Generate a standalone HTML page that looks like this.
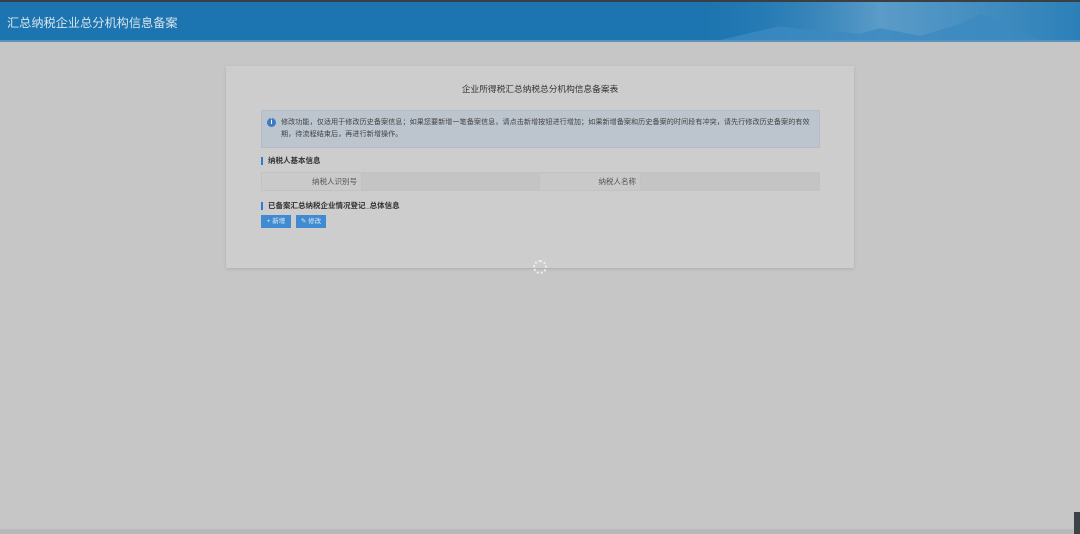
<!DOCTYPE html>
<html><head><meta charset="utf-8"><style>
body{margin:0;width:1080px;height:534px;background:#c6c6c6;position:relative;overflow:hidden;font-family:"Liberation Sans","Noto Sans CJK SC",sans-serif}
.top{position:absolute;left:0;top:0;width:1080px;height:2px;background:#3a3f45}
.hdr{position:absolute;left:0;top:2px;width:1080px;height:38px;background:#1c74b0;overflow:hidden}
.hdr .t{position:absolute;left:7px;top:11px;color:#d8e4ee;font-size:12.2px}
.hdr svg{position:absolute;left:680px;top:0}
.under{position:absolute;left:0;top:40px;width:1080px;height:2px;background:#5a93bd}
.card{position:absolute;left:226px;top:66px;width:628px;height:202px;background:#cdcdcd;box-shadow:0 1px 3px rgba(0,0,0,.12)}
.title{position:absolute;left:0;width:628px;top:16px;text-align:center;font-size:8.7px;color:#333}
.info{position:absolute;left:35px;top:44px;width:557px;height:36px;background:#bcc4cd;border:1px solid #b3bdc8;font-size:7.1px;color:#444;line-height:12px}
.info .i{position:absolute;left:5px;top:7px;width:9px;height:9px;border-radius:50%;background:#3d7bc2;color:#fff;font-size:7px;text-align:center;line-height:9px;font-weight:bold}
.info .x{position:absolute;left:19px;top:5px;width:530px;letter-spacing:.05px}
.sec{position:absolute;left:35px;font-size:7.5px;font-weight:bold;color:#333;padding-left:5px;border-left:2px solid #2a7fd0;line-height:8px}
.tbl{position:absolute;left:35px;top:106px;width:557px;height:17px;border:1px solid #c2c2c2;background:#c9c9c9}
.tbl div{position:absolute;top:0;height:17px;font-size:7.5px;color:#555;line-height:17px}
.btn{position:absolute;top:149px;height:13px;background:#3f8ad0;color:#dfeaf4;font-size:6.5px;line-height:13px;text-align:center}
</style></head><body>
<div class="top"></div>
<div class="hdr"><div class="t">汇总纳税企业总分机构信息备案</div>
<svg width="400" height="38"><defs><linearGradient id="g" x1="0" x2="1"><stop offset="0" stop-color="#1c74b0" stop-opacity="0"/><stop offset=".5" stop-color="#5b9cc8"/><stop offset="1" stop-color="#2b80b8"/></linearGradient></defs><rect width="400" height="38" fill="url(#g)"/><path d="M40 38 L100 24 L120 27 L160 30 L180 32 L200 26 L240 34 L280 22 L300 12 L320 18 L340 30 L360 38Z" fill="#3c8ac0" opacity=".8"/></svg></div>
<div class="under"></div>
<div class="card">
<div class="title">企业所得税汇总纳税总分机构信息备案表</div>
<div class="info"><div class="i">i</div><div class="x">修改功能，仅适用于修改历史备案信息；如果您要新增一笔备案信息，请点击新增按钮进行增加；如果新增备案和历史备案的时间段有冲突，请先行修改历史备案的有效期，待流程结束后，再进行新增操作。</div></div>
<div class="sec" style="top:91px">纳税人基本信息</div>
<div class="tbl"><div style="left:0;width:95px;text-align:right;padding-right:4px;background:#cacaca;border-right:1px solid #c2c2c2">纳税人识别号</div><div style="left:100px;width:177px;background:#c4c4c4;border-right:1px solid #c2c2c2"></div><div style="left:278px;width:96px;text-align:right;padding-right:4px;border-right:1px solid #c2c2c2">纳税人名称</div><div style="left:379px;width:178px;background:#c4c4c4"></div></div>
<div class="sec" style="top:136px">已备案汇总纳税企业情况登记_总体信息</div>
<div class="btn" style="left:35px;width:30px">+ 新增</div>
<div class="btn" style="left:70px;width:30px">✎ 修改</div>
</div>
<div style="position:absolute;left:533px;top:260px;width:14px;height:14px;border-radius:50%;border:2px dotted #e8eef4;box-sizing:border-box"></div>
<div style="position:absolute;left:0;top:529px;width:1080px;height:5px;background:#b9b9b9"></div>
<div style="position:absolute;left:1074px;top:512px;width:6px;height:22px;background:#3d4148"></div>
</body></html>
